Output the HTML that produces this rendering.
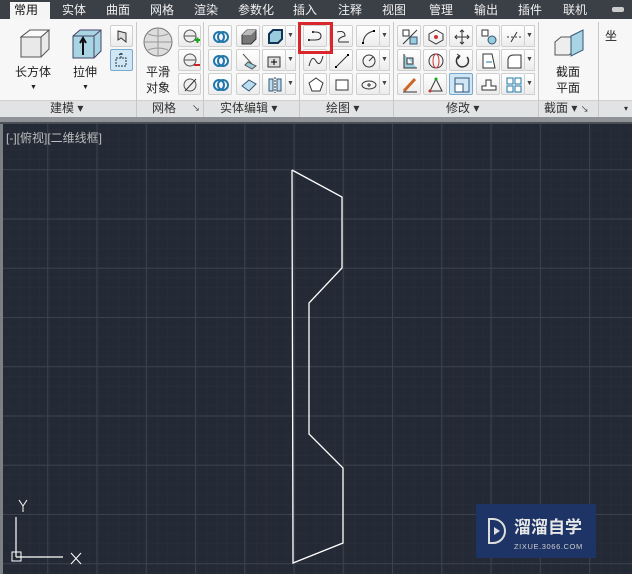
<!DOCTYPE html>
<html><head><meta charset="utf-8"><style>
*{margin:0;padding:0;box-sizing:border-box}
body{width:632px;height:574px;overflow:hidden;background:#262c37;font-family:"Liberation Sans","Noto Sans CJK SC",sans-serif;position:relative}
.abs{position:absolute}
#tabs{left:0;top:0;width:632px;height:19px;background:#3b3f46}
.tab{position:absolute;top:2px;font-size:12px;color:#f0f0f0;line-height:16px}
#rib{left:0;top:19px;width:632px;height:81px;background:#f7f7f7}
#titles{left:0;top:100px;width:632px;height:17px;background:#e2e3e4;border-top:1px solid #d0d0d0}
.pt{position:absolute;top:101px;font-size:12px;color:#333;line-height:15px}
.sep{position:absolute;top:22px;width:1px;height:95px;background:#c8c8c8}
.b{position:absolute;width:24px;height:22px;border:1px solid #cfcfcf;background:linear-gradient(#fff,#ececec);border-radius:2px}
.b svg{position:absolute;left:3px;top:2px}
.dd{position:absolute;width:10px;height:22px;border:1px solid #cfcfcf;border-left:none;background:linear-gradient(#fff,#ececec);font-size:7px;color:#444;text-align:center;line-height:20px}
.lbl{position:absolute;font-size:12px;color:#222;line-height:16px;text-align:center}
</style></head><body>
<div id="tabs" class="abs">
<div class="abs" style="left:10px;top:2px;width:40px;height:17px;background:#f5f5f5"></div>
<div class="tab" style="left:14px;color:#111">常用</div>
<div class="tab" style="left:62px">实体</div>
<div class="tab" style="left:106px">曲面</div>
<div class="tab" style="left:150px">网格</div>
<div class="tab" style="left:194px">渲染</div>
<div class="tab" style="left:238px">参数化</div>
<div class="tab" style="left:293px">插入</div>
<div class="tab" style="left:338px">注释</div>
<div class="tab" style="left:382px">视图</div>
<div class="tab" style="left:429px">管理</div>
<div class="tab" style="left:474px">输出</div>
<div class="tab" style="left:518px">插件</div>
<div class="tab" style="left:563px">联机</div>
<div class="abs" style="left:612px;top:7px;width:12px;height:5px;background:#ccc;border-radius:2px"></div>
</div>
<div id="rib" class="abs"></div>
<div id="titles" class="abs"></div>
<div class="sep" style="left:136px"></div><div class="sep" style="left:203px"></div>
<div class="sep" style="left:299px"></div><div class="sep" style="left:393px"></div>
<div class="sep" style="left:538px"></div><div class="sep" style="left:598px"></div>
<div class="pt" style="left:50px">建模 ▾</div>
<div class="pt" style="left:152px">网格</div><div class="pt" style="left:192px;font-size:8px">↘</div>
<div class="pt" style="left:220px">实体编辑 ▾</div>
<div class="pt" style="left:326px">绘图 ▾</div>
<div class="pt" style="left:446px">修改 ▾</div>
<div class="pt" style="left:544px">截面 ▾ <span style="font-size:8px">↘</span></div>
<div class="pt" style="left:624px;font-size:8px">▾</div>

<svg class="abs" style="left:18px;top:27px" width="34" height="34"><path d="M3 10 L12 3 H31 V22 L23 30 H3Z" fill="#e9e9e9" stroke="#555"/><path d="M3 10 H23 V30 M23 10 L31 3" fill="none" stroke="#555"/><path d="M3 10 L12 3 H31 L23 10Z" fill="#fafafa" stroke="#555"/></svg>
<div class="lbl" style="left:15px;top:64px">长方体</div><div class="lbl" style="left:30px;top:80px;font-size:7px">▼</div>
<svg class="abs" style="left:70px;top:27px" width="34" height="34"><path d="M3 9 L10 3 H31 V24 L24 31 H3Z" fill="#a9d4e4" stroke="#446"/><path d="M3 9 H24 V31 M24 9 L31 3" fill="none" stroke="#446"/><path d="M13 28 V13 M10 16 L13 11 L16 16" stroke="#111" stroke-width="2" fill="none"/></svg>
<div class="lbl" style="left:73px;top:64px">拉伸</div><div class="lbl" style="left:82px;top:80px;font-size:7px">▼</div>
<div class="b" style="left:110px;top:25px;width:23px"><svg width="16" height="16"><path d="M4 3 L12 5 V14 L7 10 L4 12Z" fill="#ddd" stroke="#333"/></svg></div>
<div class="b" style="left:110px;top:49px;width:23px;background:#cfe6f5;border-color:#7aa8cc"><svg width="16" height="16"><path d="M2 6 H12 V14 H2Z M7 6 V1 M5 3 L7 1 L9 3" fill="none" stroke="#234" stroke-dasharray="2 1"/></svg></div>
<svg class="abs" style="left:142px;top:26px" width="32" height="32"><circle cx="16" cy="16" r="14" fill="#ddd" stroke="#777"/><path d="M2 16 H30 M16 2 V30 M6 8 Q16 12 26 8 M6 24 Q16 20 26 24" stroke="#999" fill="none"/></svg>
<div class="lbl" style="left:146px;top:64px">平滑<br>对象</div>
<div class="b" style="left:178px;top:25px;width:23px"><svg width="18" height="18"><circle cx="8" cy="8" r="6" fill="#eee" stroke="#555"/><path d="M2 8 H14" stroke="#555"/><path d="M13 12 H18 M15.5 9.5 V15" stroke="#1a1" stroke-width="2"/></svg></div>
<div class="b" style="left:178px;top:49px;width:23px"><svg width="18" height="18"><circle cx="8" cy="8" r="6" fill="#eee" stroke="#555"/><path d="M2 8 H14" stroke="#555"/><path d="M12 13 H18" stroke="#c22" stroke-width="2"/></svg></div>
<div class="b" style="left:178px;top:73px;width:23px"><svg width="18" height="18"><circle cx="8" cy="9" r="6" fill="#eee" stroke="#555"/><path d="M3 15 L14 3" stroke="#333"/></svg></div>

<div class="b" style="left:208px;top:25px"><svg width="18" height="18"><circle cx="7" cy="9" r="5" fill="none" stroke="#27a" stroke-width="2"/><circle cx="11" cy="9" r="5" fill="none" stroke="#27a" stroke-width="2"/></svg></div>
<div class="b" style="left:208px;top:49px"><svg width="18" height="18"><circle cx="7" cy="9" r="5" fill="none" stroke="#27a" stroke-width="2"/><circle cx="11" cy="9" r="5" fill="none" stroke="#27a" stroke-width="2"/></svg></div>
<div class="b" style="left:208px;top:73px"><svg width="18" height="18"><circle cx="7" cy="9" r="5" fill="none" stroke="#27a" stroke-width="2"/><circle cx="11" cy="9" r="5" fill="none" stroke="#27a" stroke-width="2"/></svg></div>
<div class="b" style="left:236px;top:25px"><svg width="18" height="18"><path d="M2 7 L7 2 H16 V11 L11 16 H2Z" fill="#777" stroke="#333"/><path d="M2 7 L7 2 H16 L11 7Z" fill="#bbb"/></svg></div>
<div class="b" style="left:236px;top:49px"><svg width="18" height="18"><path d="M3 2 L12 12 M8 10 L16 14 L12 17 L5 13Z" stroke="#555" fill="#9cd"/></svg></div>
<div class="b" style="left:236px;top:73px"><svg width="18" height="18"><path d="M2 10 L9 4 L16 8 L9 15Z" fill="#bde" stroke="#357"/></svg></div>
<div class="b" style="left:262px;top:25px"><svg width="18" height="18"><path d="M3 6 L7 2 H16 V11 L12 15 H3Z" fill="#9cd" stroke="#135" stroke-width="2"/></svg></div><div class="dd" style="left:286px;top:25px">▼</div>
<div class="b" style="left:262px;top:49px"><svg width="18" height="18"><rect x="2" y="5" width="12" height="10" fill="#ddd" stroke="#333"/><path d="M8 7 V13 M5 10 H11" stroke="#000"/></svg></div><div class="dd" style="left:286px;top:49px">▼</div>
<div class="b" style="left:262px;top:73px"><svg width="18" height="18"><rect x="3" y="3" width="4" height="12" fill="#bde" stroke="#357"/><rect x="11" y="3" width="4" height="12" fill="#bde" stroke="#357"/><path d="M9 1 V17" stroke="#333" stroke-dasharray="2 1"/></svg></div><div class="dd" style="left:286px;top:73px">▼</div>

<div class="b" style="left:303px;top:25px"><svg width="18" height="18"><path d="M2 12 H8 Q14 12 14 8 Q14 4 8 4 H6" fill="none" stroke="#333"/><rect x="1" y="11" width="2" height="2" fill="#333"/><rect x="5" y="3" width="2" height="2" fill="#333"/></svg></div>
<div class="b" style="left:329px;top:25px"><svg width="18" height="18"><path d="M4 4 Q12 2 12 8 Q4 10 6 14 H16" fill="none" stroke="#333"/></svg></div>
<div class="b" style="left:356px;top:25px"><svg width="18" height="18"><path d="M3 15 Q4 5 14 3" fill="none" stroke="#333"/><rect x="2" y="14" width="2" height="2"/><rect x="13" y="2" width="2" height="2"/></svg></div><div class="dd" style="left:380px;top:25px">▼</div>
<div class="b" style="left:303px;top:49px"><svg width="18" height="18"><path d="M2 14 Q5 2 9 9 T16 4" fill="none" stroke="#333"/></svg></div>
<div class="b" style="left:329px;top:49px"><svg width="18" height="18"><path d="M3 15 L15 3" stroke="#333"/><rect x="2" y="14" width="2" height="2"/><rect x="14" y="2" width="2" height="2"/></svg></div>
<div class="b" style="left:356px;top:49px"><svg width="18" height="18"><circle cx="9" cy="9" r="6" fill="none" stroke="#333"/><path d="M9 9 L13 5" stroke="#333"/></svg></div><div class="dd" style="left:380px;top:49px">▼</div>
<div class="b" style="left:303px;top:73px"><svg width="18" height="18"><path d="M9 2 L16 7 L13 15 H5 L2 7Z" fill="#fff" stroke="#333"/></svg></div>
<div class="b" style="left:329px;top:73px"><svg width="18" height="18"><rect x="3" y="4" width="12" height="10" fill="#fff" stroke="#333"/></svg></div>
<div class="b" style="left:356px;top:73px"><svg width="18" height="18"><ellipse cx="9" cy="9" rx="7" ry="4" fill="none" stroke="#333"/><path d="M9 7 V11 M7 9 H11" stroke="#333"/></svg></div><div class="dd" style="left:380px;top:73px">▼</div>

<div class="b" style="left:397px;top:25px"><svg width="18" height="18"><rect x="2" y="2" width="6" height="6" fill="#fff" stroke="#333"/><rect x="9" y="9" width="7" height="7" fill="#9cd" stroke="#357"/><path d="M2 16 L16 2" stroke="#333"/></svg></div>
<div class="b" style="left:423px;top:25px"><svg width="18" height="18"><path d="M9 2 L16 6 V12 L9 16 L2 12 V6Z" fill="none" stroke="#333"/><circle cx="9" cy="9" r="2" fill="#c33"/></svg></div>
<div class="b" style="left:449px;top:25px"><svg width="18" height="18"><path d="M9 2 V16 M2 9 H16 M7 4 L9 2 L11 4 M7 14 L9 16 L11 14 M4 7 L2 9 L4 11 M14 7 L16 9 L14 11" fill="none" stroke="#333"/></svg></div>
<div class="b" style="left:476px;top:25px"><svg width="18" height="18"><rect x="2" y="2" width="6" height="6" fill="#fff" stroke="#333"/><circle cx="12" cy="12" r="4" fill="#9cd" stroke="#357"/></svg></div>
<div class="b" style="left:501px;top:25px"><svg width="18" height="18"><path d="M2 9 H16" stroke="#333" stroke-dasharray="2 2"/><path d="M6 14 L12 4" stroke="#333"/></svg></div><div class="dd" style="left:525px;top:25px">▼</div>
<div class="b" style="left:397px;top:49px"><svg width="18" height="18"><path d="M3 2 V16 H16 M6 6 H12 V12 H6Z" fill="#9cd" stroke="#333"/></svg></div>
<div class="b" style="left:423px;top:49px"><svg width="18" height="18"><circle cx="9" cy="9" r="7" fill="none" stroke="#333"/><ellipse cx="9" cy="9" rx="3" ry="7" fill="none" stroke="#c33"/></svg></div>
<div class="b" style="left:449px;top:49px"><svg width="18" height="18"><path d="M14 5 A6 6 0 1 1 6 4" fill="none" stroke="#333" stroke-width="1.5"/><path d="M4 2 L7 4 L5 7" fill="none" stroke="#333"/></svg></div>
<div class="b" style="left:476px;top:49px"><svg width="18" height="18"><path d="M3 2 V16 H15 L12 2Z" fill="#fff" stroke="#333"/><path d="M6 10 H12" stroke="#27a"/></svg></div>
<div class="b" style="left:501px;top:49px"><svg width="18" height="18"><path d="M3 16 V8 Q3 3 9 3 H16 V16Z" fill="#fff" stroke="#333"/></svg></div><div class="dd" style="left:525px;top:49px">▼</div>
<div class="b" style="left:397px;top:73px"><svg width="18" height="18"><path d="M3 15 L14 3" stroke="#c62" stroke-width="3"/><path d="M2 16 H16" stroke="#333"/></svg></div>
<div class="b" style="left:423px;top:73px"><svg width="18" height="18"><path d="M9 3 L15 15 H3Z" fill="none" stroke="#333"/><circle cx="9" cy="3" r="1.5" fill="#1a1"/><circle cx="3" cy="15" r="1.5" fill="#c33"/></svg></div>
<div class="b" style="left:449px;top:73px;background:#cfe6f5;border-color:#7aa8cc"><svg width="18" height="18"><rect x="2" y="2" width="14" height="14" fill="none" stroke="#357"/><rect x="2" y="8" width="8" height="8" fill="#fff" stroke="#357"/></svg></div>
<div class="b" style="left:476px;top:73px"><svg width="18" height="18"><path d="M2 14 H16 V10 H11 V4 H6 V10 H2Z" fill="#fff" stroke="#333"/></svg></div>
<div class="b" style="left:501px;top:73px"><svg width="18" height="18"><rect x="2" y="2" width="6" height="6" fill="#fff" stroke="#27a"/><rect x="10" y="2" width="6" height="6" fill="#fff" stroke="#27a"/><rect x="2" y="10" width="6" height="6" fill="#fff" stroke="#27a"/><rect x="10" y="10" width="6" height="6" fill="#fff" stroke="#27a"/></svg></div><div class="dd" style="left:525px;top:73px">▼</div>

<svg class="abs" style="left:553px;top:28px" width="34" height="32"><path d="M2 14 L8 9 H22 V22 L16 27 H2Z" fill="#eee" stroke="#555"/><path d="M18 8 L30 2 V22 L18 28Z" fill="#a9d4e4" stroke="#357"/></svg>
<div class="lbl" style="left:556px;top:64px">截面<br>平面</div>
<div class="lbl" style="left:605px;top:28px">坐</div>

<div class="abs" style="left:298px;top:22px;width:35px;height:32px;border:3px solid #d8262c;z-index:5"></div>

<div class="abs" style="left:0;top:117px;width:632px;height:7px;background:#8f9296;border-bottom:2px solid #4a4e55"></div>
<div class="abs" style="left:0;top:124px;width:3px;height:450px;background:#7c7f84"></div>

<svg class="abs" style="left:3px;top:124px" width="629" height="450">
<defs>
<pattern id="mn" width="9.85" height="9.85" patternUnits="userSpaceOnUse" x="-3" y="-4"><path d="M0 0 V9.85 M0 0 H9.85" stroke="#29303b" stroke-width="1"/></pattern>
<pattern id="mj" width="49.25" height="49.25" patternUnits="userSpaceOnUse" x="-5" y="-4"><path d="M0.5 0 V49.25 M0 0.5 H49.25" stroke="#3b424e" stroke-width="1"/></pattern>
</defs>
<rect width="629" height="450" fill="#242a35"/>
<rect width="629" height="450" fill="url(#mn)"/>
<rect width="629" height="450" fill="url(#mj)"/>
<text x="3" y="18" font-size="12" fill="#bdbdbd" font-family="Liberation Sans,Noto Sans CJK SC,sans-serif">[-][俯视][二维线框]</text>
<polyline points="289,46 339,73 339,144 306,179 306,310 340,344 340,419 290,439 289,46" fill="none" stroke="#fff" stroke-width="1.3"/>
<path d="M13 433 V393 M13 433 H60" stroke="#fff" stroke-width="1.2" fill="none"/>
<rect x="9" y="428" width="9" height="9" fill="none" stroke="#fff"/>
<path d="M16 376 L20 382 L24 376 M20 382 V388" stroke="#fff" fill="none"/>
<path d="M68 429 L78 440 M78 429 L68 440" stroke="#fff"/>
<rect x="473" y="380" width="120" height="54" fill="#1e3466"/>
<path d="M486 395 h4 a12 12 0 0 1 0 24 h-4 z" fill="none" stroke="#ddd" stroke-width="2"/>
<path d="M491 403 L497 407 L491 411Z" fill="#ddd"/>
<text x="511" y="409" font-size="17" fill="#e8e8e8" font-family="Noto Sans CJK SC,sans-serif" font-weight="bold">溜溜自学</text>
<text x="511" y="425" font-size="7.5" fill="#ccc" font-family="Liberation Sans,sans-serif" letter-spacing="0.6">ZIXUE.3066.COM</text>
</svg>
</body></html>
